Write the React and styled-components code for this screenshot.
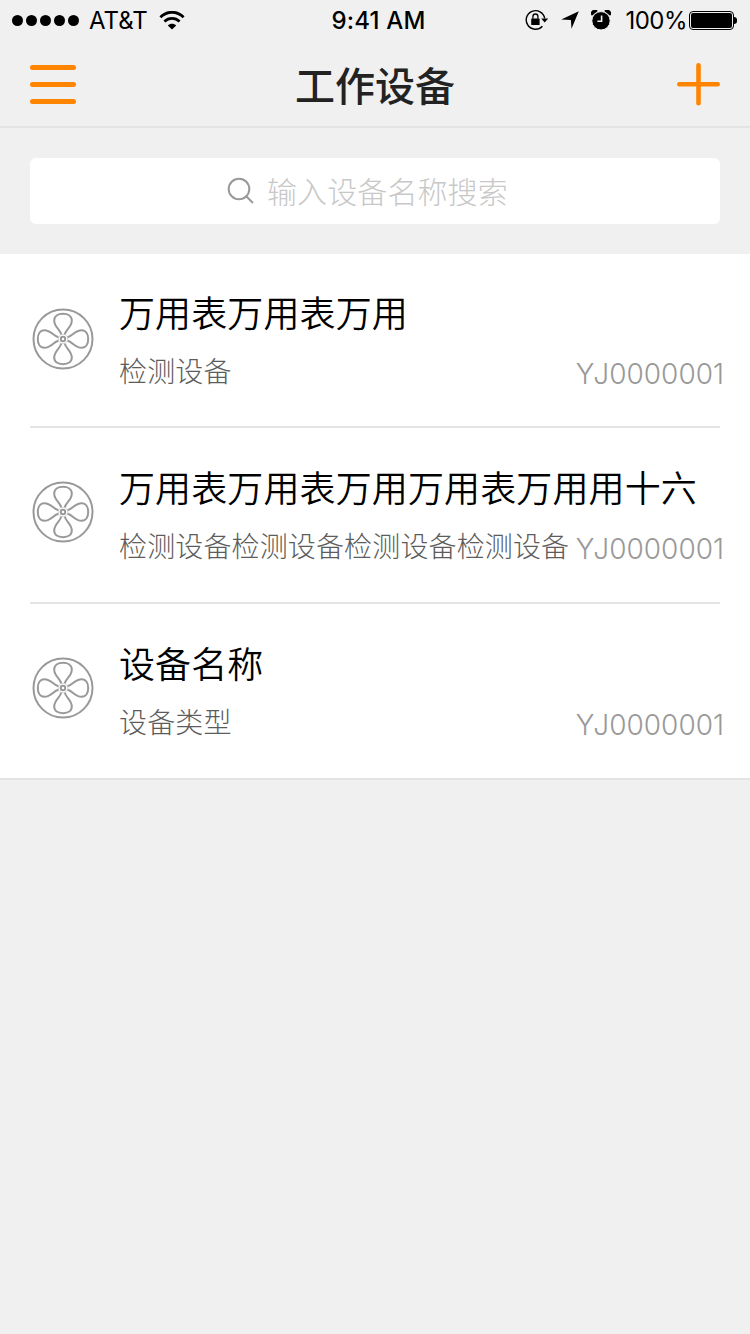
import React, { useState } from "react";
import styled, { createGlobalStyle } from "styled-components";

const deviceList = [
  { id: 1, name: "万用表万用表万用", type: "检测设备", code: "YJ0000001" },
  { id: 2, name: "万用表万用表万用万用表万用用十六", type: "检测设备检测设备检测设备检测设备", code: "YJ0000001" },
  { id: 3, name: "设备名称", type: "设备类型", code: "YJ0000001" },
];

const FanIcon = () => (
  <svg width="62" height="62" viewBox="-31 -31 62 62" fill="none" stroke="#999" strokeWidth="2">
    <circle r="29.5" />
    <circle r="2.2" />
    {[0, 90, 180, 270].map((deg) => (
      <path
        key={deg}
        transform={`rotate(${deg})`}
        d="M-1.8 -4.6C-2.8 -9.5 -8.8 -12 -8.8 -18.6C-8.8 -23 -5 -25.2 0 -25.2C5 -25.2 8.8 -23 8.8 -18.6C8.8 -12 2.8 -9.5 1.8 -4.6"
      />
    ))}
    <circle r="4.8" strokeWidth="1" strokeOpacity="0.4" />
  </svg>
);

const WifiIcon = () => (
  <svg width="26" height="19" viewBox="0 0 26 19" fill="none" stroke="#000" strokeWidth="2.8">
    <path d="M1.4 6.2C8 -0.4 18 -0.4 24.6 6.2" />
    <path d="M5.4 10.5C9.8 6.4 16.2 6.4 20.6 10.5" />
    <path d="M13 18.4L8.8 14.4C11 12.2 15 12.2 17.2 14.4Z" fill="#000" stroke="none" />
  </svg>
);

const LockIcon = () => (
  <svg width="24" height="22" viewBox="0 0 24 22" fill="none" stroke="#000">
    <path d="M19.7 9.4A9.3 9.3 0 1 0 17.4 17.2" strokeWidth="1.4" />
    <path d="M16.2 9.4H23.2L19.7 13.6Z" fill="#000" stroke="none" />
    <rect x="6.2" y="9.4" width="8.4" height="6.6" rx="0.6" fill="#000" stroke="none" />
    <path d="M7.9 9.8V7.5A2.5 2.5 0 0 1 12.9 7.5V9.8" strokeWidth="1.3" />
  </svg>
);

const LocationIcon = () => (
  <svg width="18" height="18" viewBox="0 0 18 18">
    <path d="M17.8 0.2L10.5 17.8L9.9 9L0.2 8.4Z" />
  </svg>
);

const AlarmIcon = () => (
  <svg width="20" height="20" viewBox="0 0 20 20">
    <path d="M0.9 5.8A3.8 3.8 0 0 1 6.8 0.9ZM19.1 5.8A3.8 3.8 0 0 0 13.2 0.9Z" />
    <circle cx="10" cy="10.8" r="9.2" stroke="#f0f0f0" strokeWidth="1" />
    <path d="M10.6 5.6V11.3H6.4" fill="none" stroke="#f0f0f0" strokeWidth="1.6" />
  </svg>
);

const App = () => {
  const [keyword, setKeyword] = useState("");
  const devices = deviceList.filter((device) => device.name.includes(keyword));

  return (
    <Page>
      <GlobalStyle />
      <StatusBar>
        <Signal>
          <Dots>
            {[1, 2, 3, 4, 5].map((n) => <i key={n} />)}
          </Dots>
          <Carrier>AT&amp;T</Carrier>
          <WifiIcon />
        </Signal>
        <Time>9:41 AM</Time>
        <Status>
          <LockIcon />
          <LocationIcon />
          <AlarmIcon />
          <Percent>100%</Percent>
          <Battery />
        </Status>
      </StatusBar>

      <NavBar>
        <MenuBtn aria-label="菜单">
          <span />
          <span />
          <span />
        </MenuBtn>
        <Title>工作设备</Title>
        <AddBtn aria-label="添加">
          <svg width="44" height="44" viewBox="0 0 44 44" stroke="#ff8400" strokeWidth="4.6" strokeLinecap="round">
            <path d="M22.5 3.3V41.3M3.3 22.3H41.7" />
          </svg>
        </AddBtn>
      </NavBar>

      <SearchWrap>
        <SearchBox>
          <svg width="28" height="28" viewBox="0 0 28 28" fill="none" stroke="#999" strokeWidth="2">
            <circle cx="12" cy="12" r="10.3" />
            <path d="M19.2 19.2L26 26" />
          </svg>
          <input
            value={keyword}
            placeholder="输入设备名称搜索"
            onChange={(e) => setKeyword(e.target.value)}
          />
        </SearchBox>
      </SearchWrap>

      <DeviceList>
        {devices.map((device) => (
          <Device key={device.id}>
            <FanIcon />
            <Info>
              <h2>{device.name}</h2>
              <Detail>
                <p>{device.type}</p>
                <Code>{device.code}</Code>
              </Detail>
            </Info>
          </Device>
        ))}
      </DeviceList>
    </Page>
  );
};

const GlobalStyle = createGlobalStyle`
  * {
    box-sizing: border-box;
  }
  body {
    margin: 0;
    background: #f0f0f0;
    font-family: Inter, "Noto Sans CJK SC", sans-serif;
  }
  h1, h2, p, ul {
    margin: 0;
    padding: 0;
  }
  svg {
    display: block;
    flex-shrink: 0;
  }
`;

const Page = styled.div`
  width: 750px;
  min-height: 1334px;
  background: #f0f0f0;
`;

const StatusBar = styled.div`
  display: grid;
  grid-template-columns: 1fr auto 1fr;
  align-items: center;
  height: 40px;
  padding: 0 12px;
  font-size: 24px;
  line-height: 38px;

  span {
    padding-top: 2px;
  }
`;

const Signal = styled.div`
  display: flex;
  align-items: center;
`;

const Dots = styled.div`
  display: flex;
  gap: 3px;

  i {
    width: 11px;
    height: 11px;
    border-radius: 50%;
    background: #000;
  }
`;

const Carrier = styled.span`
  margin: 0 11px 0 10px;
`;

const Time = styled.span`
  padding-left: 7px;
  font-weight: 500;
  letter-spacing: 0.2px;
`;

const Status = styled.div`
  display: flex;
  align-items: center;
  justify-content: flex-end;

  svg {
    margin-right: 12px;
  }
`;

const Percent = styled.span`
  margin: 0 2px;
  letter-spacing: -0.5px;
`;

const Battery = styled.div`
  position: relative;
  width: 45px;
  height: 19px;
  margin-right: 4px;
  border: 1px solid #000;
  border-radius: 4px;
  padding: 1px;

  &::before {
    content: "";
    display: block;
    height: 100%;
    border-radius: 2px;
    background: #000;
  }
  &::after {
    content: "";
    position: absolute;
    top: 5px;
    right: -4px;
    width: 3px;
    height: 7px;
    border-radius: 0 4px 4px 0;
    background: #000;
  }
`;

const NavBar = styled.header`
  display: grid;
  grid-template-columns: 1fr auto 1fr;
  align-items: center;
  height: 88px;
  padding: 2px 30px 0;
  border-bottom: 2px solid #e4e4e4;
`;

const Title = styled.h1`
  padding-top: 6px;
  color: #222;
  font-size: 40px;
  font-weight: 500;
  line-height: 78px;
`;

const MenuBtn = styled.button`
  display: flex;
  flex-direction: column;
  gap: 12px;
  width: 46px;
  padding: 0;
  background: none;
  border: none;
  cursor: pointer;

  span {
    height: 5px;
    border-radius: 3px;
    background: #ff8400;
  }
`;

const AddBtn = styled.button`
  justify-self: end;
  padding: 0;
  background: none;
  border: none;
  cursor: pointer;
`;

const SearchWrap = styled.div`
  padding: 30px;
`;

const SearchBox = styled.label`
  display: flex;
  align-items: center;
  justify-content: center;
  gap: 12px;
  height: 66px;
  padding: 0 14px 1px 0;
  border-radius: 6px;
  background: #fff;

  input {
    width: 242px;
    padding: 2px 0 0;
    border: none;
    outline: none;
    font-family: inherit;
    font-size: 30px;
    font-weight: 300;
    letter-spacing: 0.1px;
  }
  input::placeholder {
    color: #c8c8c8;
  }
`;

const DeviceList = styled.ul`
  background: #fff;
  border-bottom: 2px solid #e4e4e4;
`;

const Device = styled.li`
  display: flex;
  align-items: center;
  gap: 25px;
  height: 176px;
  margin: 0 30px;
  padding-left: 2px;
  border-bottom: 2px solid #e4e4e4;

  > svg {
    margin-bottom: 6px;
  }
  &:first-child {
    height: 174px;
  }
  &:first-child > svg {
    margin-bottom: 2px;
  }
  &:last-child {
    height: 174px;
    border-bottom: none;
  }
`;

const Info = styled.div`
  flex: 1;
  min-width: 0;

  h2 {
    color: #000;
    font-size: 36px;
    font-weight: 350;
    line-height: 54px;
    letter-spacing: 0.12px;
    white-space: nowrap;
  }
`;

const Detail = styled.div`
  display: flex;
  justify-content: space-between;
  margin: 10px -4px 0 0;

  p {
    color: #5c5c5c;
    font-size: 28px;
    font-weight: 300;
    line-height: 42px;
    letter-spacing: 0.14px;
    white-space: nowrap;
  }
`;

const Code = styled.span`
  color: #999;
  font-size: 28px;
  font-weight: 300;
  line-height: 46px;
  height: 42px;
`;

export default App;
